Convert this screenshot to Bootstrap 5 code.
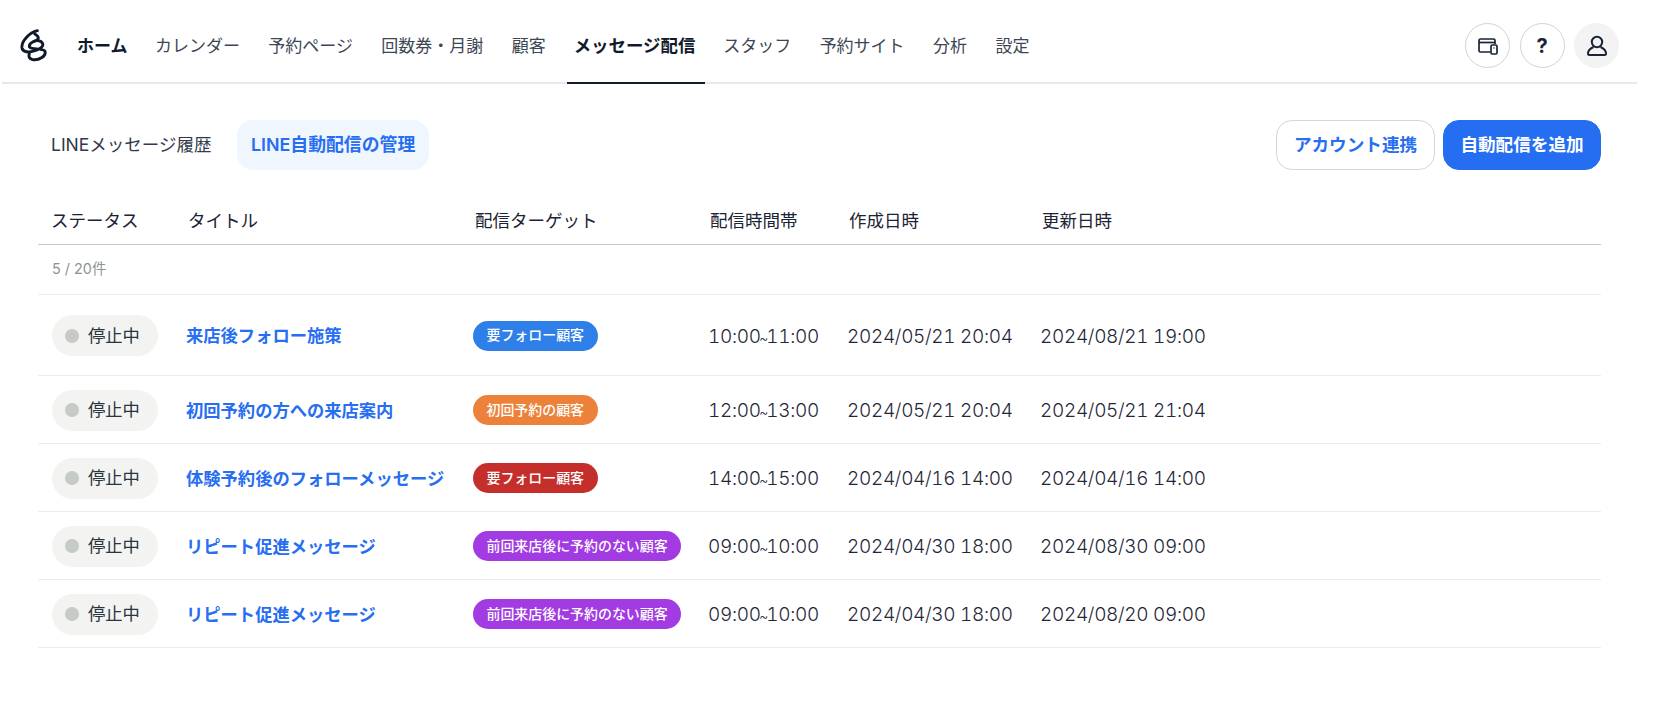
<!DOCTYPE html>
<html lang="ja">
<head>
<meta charset="utf-8">
<title>LINE自動配信の管理</title>
<link href="https://cdn.jsdelivr.net/npm/bootstrap@5.3.0/dist/css/bootstrap.min.css" rel="stylesheet">
<style>
html,body{height:100%;background:#fff}
body{font-family:Inter,"Noto Sans CJK JP",sans-serif;color:#1b2434;font-size:17.5px;overflow:hidden}
.app-shell{width:1635px;margin-left:2px}
.top-bar{height:84px;border-bottom:2px solid #e8e8e8;padding:9px 18px 0 18px}
.logo-mark{width:27px;height:33px;margin-right:23px;flex:none}
.main-nav{gap:14.4px;height:73px}
.main-nav a{display:flex;align-items:center;height:75px;padding:2px 7px 0;color:#3d4655;text-decoration:none;font-size:17px;white-space:nowrap;margin-bottom:-2px;border-bottom:2px solid transparent}
.main-nav a.is-strong{color:#111a2b;font-weight:700;margin-right:-1px}
.main-nav a.is-current{border-bottom-color:#111a2b;font-weight:700;color:#111a2b;font-size:17.45px;padding-left:6.5px;padding-right:9.5px;margin-right:-3px}
.act-icons{gap:9.5px}
.round-btn{width:45px;height:45px;border-radius:50%;border:1px solid #d4d4d4;background:#fff;padding:0;color:#1b2434;font-weight:700;font-size:20px}
.round-btn.is-filled{background:#f3f3f3;border-color:#f3f3f3}
.page-body{padding:36px 36px 0 36px}
.tab-link{display:flex;align-items:center;height:50px;padding:0 14px 0 13px;border-radius:16px;text-decoration:none;color:#303a4a;font-size:17.5px}
.tab-link.is-on{background:#f0f6fe;color:#276ef1;font-weight:600;margin-left:11.5px;font-size:17.85px;padding:0 14px}
.act-btn{height:50px;border-radius:16px;font-size:17.6px;font-weight:600;padding:0;width:158px}
.act-btn.is-line{background:#fff;border:1.5px solid #d6d6d6;color:#276ef1;width:159px}
.act-btn.is-solid{background:#266ef1;border:1px solid #266ef1;color:#fff}
.msg-table{table-layout:fixed;width:100%;margin:24px 0 0;--bs-table-bg:transparent}
.msg-table th,.msg-table td{padding:0 0 0 16px;vertical-align:middle;white-space:nowrap;color:#1b2434;font-weight:400;border-bottom:1.5px solid #ececec}
.msg-table th{height:50px;border-bottom-color:#c9c9c9;font-size:17.5px;padding-top:5px}
.msg-table th:first-child,.msg-table td:first-child{padding-left:14px}
.msg-table th:first-child{padding-left:13px}
.msg-table td{height:68px;padding-left:14px;padding-top:2px}
.msg-table tr.row-tall td{height:81px}
.msg-table td.count-cell{height:50px;font-size:14.4px;color:#8d9492;padding-top:0}
.msg-table td a{color:#276ef1;font-weight:600;text-decoration:none;font-size:17.3px;position:relative;top:1px}
.msg-table td.time-cell{font-size:19px;letter-spacing:-.33px;color:#1f2839;font-weight:300;padding-top:5px;font-variant-numeric:tabular-nums}
.tilde-mark{font-size:14px;margin:0 -1.5px}
.status-pill{display:inline-flex;align-items:center;width:106px;height:41px;padding-left:13px;gap:9px;background:#f3f3f1;border-radius:21px;font-size:17.3px;color:#2a3340}
.status-dot{width:14px;height:14px;border-radius:50%;background:#c6cbc7}
.seg-badge{display:inline-flex;align-items:center;height:30px;padding:0 13.5px;border-radius:15px;color:#fff;font-size:13.95px;font-weight:500}
.seg-blue{background:#2f7fe8}.seg-orange{background:#ec823a}.seg-red{background:#c42f2c}.seg-purple{background:#a23be2}
</style>
</head>
<body>
<div class="app-shell">
<header class="top-bar d-flex align-items-center justify-content-between">
  <div class="d-flex align-items-center">
    <svg class="logo-mark" viewBox="26 28 84 100" fill="none" stroke="#111a2b" stroke-width="9" stroke-linecap="round" stroke-linejoin="round"><path d="M80 32C55 38 30 65 32 85c2 15 23 15 38 10 25-7 35-20 20-30-15-7-35 5-35 15 0 12 40 5 48 15 7 15-18 30-38 27-10-2-13-10-10-17"/><path d="M72 42c8 4 11 9 11 13s-5 8-13 10"/></svg>
    <nav class="main-nav d-flex">
      <a class="is-strong" href="#">ホーム</a><a href="#">カレンダー</a><a href="#">予約ページ</a><a href="#">回数券・月謝</a><a href="#">顧客</a><a class="is-current" href="#">メッセージ配信</a><a href="#">スタッフ</a><a href="#">予約サイト</a><a href="#">分析</a><a href="#">設定</a>
    </nav>
  </div>
  <div class="d-flex act-icons align-items-center">
    <button class="round-btn d-flex align-items-center justify-content-center" aria-label="デバイス"><svg width="22" height="20" viewBox="0 0 22 20" fill="none" stroke="#1b2434" stroke-width="1.700"><path d="M13 16H3.500A1.500 1.500 0 0 1 2 14.500V4.500A1.500 1.500 0 0 1 3.500 3h13A1.500 1.500 0 0 1 18 4.500V8"/><path d="M2 6.500h16"/><rect x="14" y="9" width="6" height="9" rx="1.200"/><path d="M16.500 12h1"/></svg></button>
    <button class="round-btn d-flex align-items-center justify-content-center">?</button>
    <button class="round-btn is-filled d-flex align-items-center justify-content-center" aria-label="ユーザー"><svg width="24" height="24" viewBox="0 0 24 24" fill="none" stroke="#1b2434" stroke-width="2"><circle cx="12" cy="8" r="5.200"/><path d="M8.500 13C5 14.500 3 17 3 19.500c0 1 .6 1.500 1.500 1.500h15c.9 0 1.500-.5 1.500-1.500 0-2.500-2-5-5.500-6.500"/></svg></button>
  </div>
</header>
<main class="page-body">
  <div class="d-flex justify-content-between align-items-center">
    <div class="d-flex">
      <a class="tab-link" href="#">LINEメッセージ履歴</a>
      <a class="tab-link is-on" href="#">LINE自動配信の管理</a>
    </div>
    <div class="d-flex gap-2">
      <button class="act-btn is-line">アカウント連携</button>
      <button class="act-btn is-solid">自動配信を追加</button>
    </div>
  </div>
  <table class="table msg-table">
    <colgroup><col style="width:134px"><col style="width:287px"><col style="width:235px"><col style="width:139px"><col style="width:193px"><col style="width:193px"><col></colgroup>
    <thead><tr><th>ステータス</th><th>タイトル</th><th>配信ターゲット</th><th>配信時間帯</th><th>作成日時</th><th>更新日時</th><th></th></tr></thead>
    <tbody>
      <tr><td class="count-cell" colspan="7">5 / 20件</td></tr>
      <tr class="row-tall"><td><span class="status-pill"><span class="status-dot"></span>停止中</span></td><td><a href="#">来店後フォロー施策</a></td><td><span class="seg-badge seg-blue">要フォロー顧客</span></td><td class="time-cell">10:00<span class="tilde-mark">~</span>11:00</td><td class="time-cell">2024/05/21 20:04</td><td class="time-cell">2024/08/21 19:00</td><td></td></tr>
      <tr><td><span class="status-pill"><span class="status-dot"></span>停止中</span></td><td><a href="#">初回予約の方への来店案内</a></td><td><span class="seg-badge seg-orange">初回予約の顧客</span></td><td class="time-cell">12:00<span class="tilde-mark">~</span>13:00</td><td class="time-cell">2024/05/21 20:04</td><td class="time-cell">2024/05/21 21:04</td><td></td></tr>
      <tr><td><span class="status-pill"><span class="status-dot"></span>停止中</span></td><td><a href="#">体験予約後のフォローメッセージ</a></td><td><span class="seg-badge seg-red">要フォロー顧客</span></td><td class="time-cell">14:00<span class="tilde-mark">~</span>15:00</td><td class="time-cell">2024/04/16 14:00</td><td class="time-cell">2024/04/16 14:00</td><td></td></tr>
      <tr><td><span class="status-pill"><span class="status-dot"></span>停止中</span></td><td><a href="#">リピート促進メッセージ</a></td><td><span class="seg-badge seg-purple">前回来店後に予約のない顧客</span></td><td class="time-cell">09:00<span class="tilde-mark">~</span>10:00</td><td class="time-cell">2024/04/30 18:00</td><td class="time-cell">2024/08/30 09:00</td><td></td></tr>
      <tr><td><span class="status-pill"><span class="status-dot"></span>停止中</span></td><td><a href="#">リピート促進メッセージ</a></td><td><span class="seg-badge seg-purple">前回来店後に予約のない顧客</span></td><td class="time-cell">09:00<span class="tilde-mark">~</span>10:00</td><td class="time-cell">2024/04/30 18:00</td><td class="time-cell">2024/08/20 09:00</td><td></td></tr>
    </tbody>
  </table>
</main>
</div>
<script src="https://cdn.jsdelivr.net/npm/bootstrap@5.3.0/dist/js/bootstrap.bundle.min.js"></script>
</body>
</html>
